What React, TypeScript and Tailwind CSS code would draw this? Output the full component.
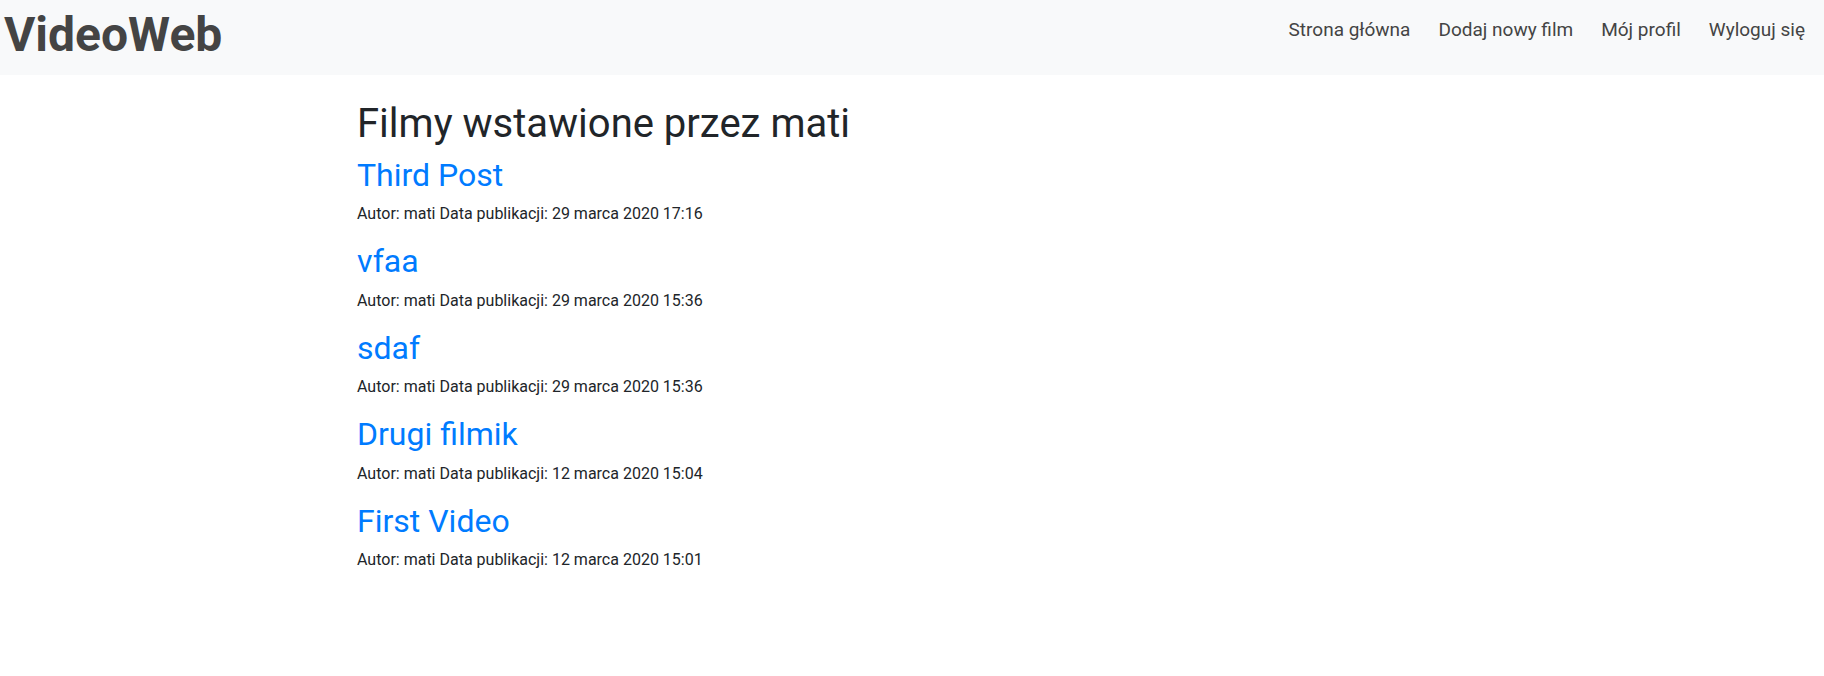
const videos = [
  { title: "Third Post", date: "29 marca 2020 17:16" },
  { title: "vfaa", date: "29 marca 2020 15:36" },
  { title: "sdaf", date: "29 marca 2020 15:36" },
  { title: "Drugi filmik", date: "12 marca 2020 15:04" },
  { title: "First Video", date: "12 marca 2020 15:01" },
];

const links = ["Strona główna", "Dodaj nowy film", "Mój profil", "Wyloguj się"];

export default function App() {
  return (
    <div className="min-h-[676px] bg-white font-['Roboto',sans-serif] text-[#212529]">
      <nav className="flex h-[75px] items-center justify-between bg-[#f8f9fa] pl-[4px] pr-[5px]">
        <a href="#" className="text-[48px] leading-[1.2] font-bold text-[#444] pb-[6px]">
          VideoWeb
        </a>
        <ul className="flex items-center">
          {links.map((l) => (
            <li key={l}>
              <a href="#" className="block px-[14px] text-[19px] text-[#444] pb-[14px]">
                {l}
              </a>
            </li>
          ))}
        </ul>
      </nav>

      <main className="mx-auto max-w-[1140px] px-[15px] pt-[25px]">
        <h1 className="mb-2 text-[40px] leading-[1.2]">Filmy wstawione przez mati</h1>
        {videos.map((v) => (
          <div key={v.title}>
            <h2 className="mb-2 text-[32px] leading-[1.2]">
              <a href="#" className="text-[#007bff]">
                {v.title}
              </a>
            </h2>
            <p className="mb-4 text-[16px] leading-[24px] text-[#212529]">
              Autor: mati Data publikacji: {v.date}
            </p>
          </div>
        ))}
      </main>
    </div>
  );
}
